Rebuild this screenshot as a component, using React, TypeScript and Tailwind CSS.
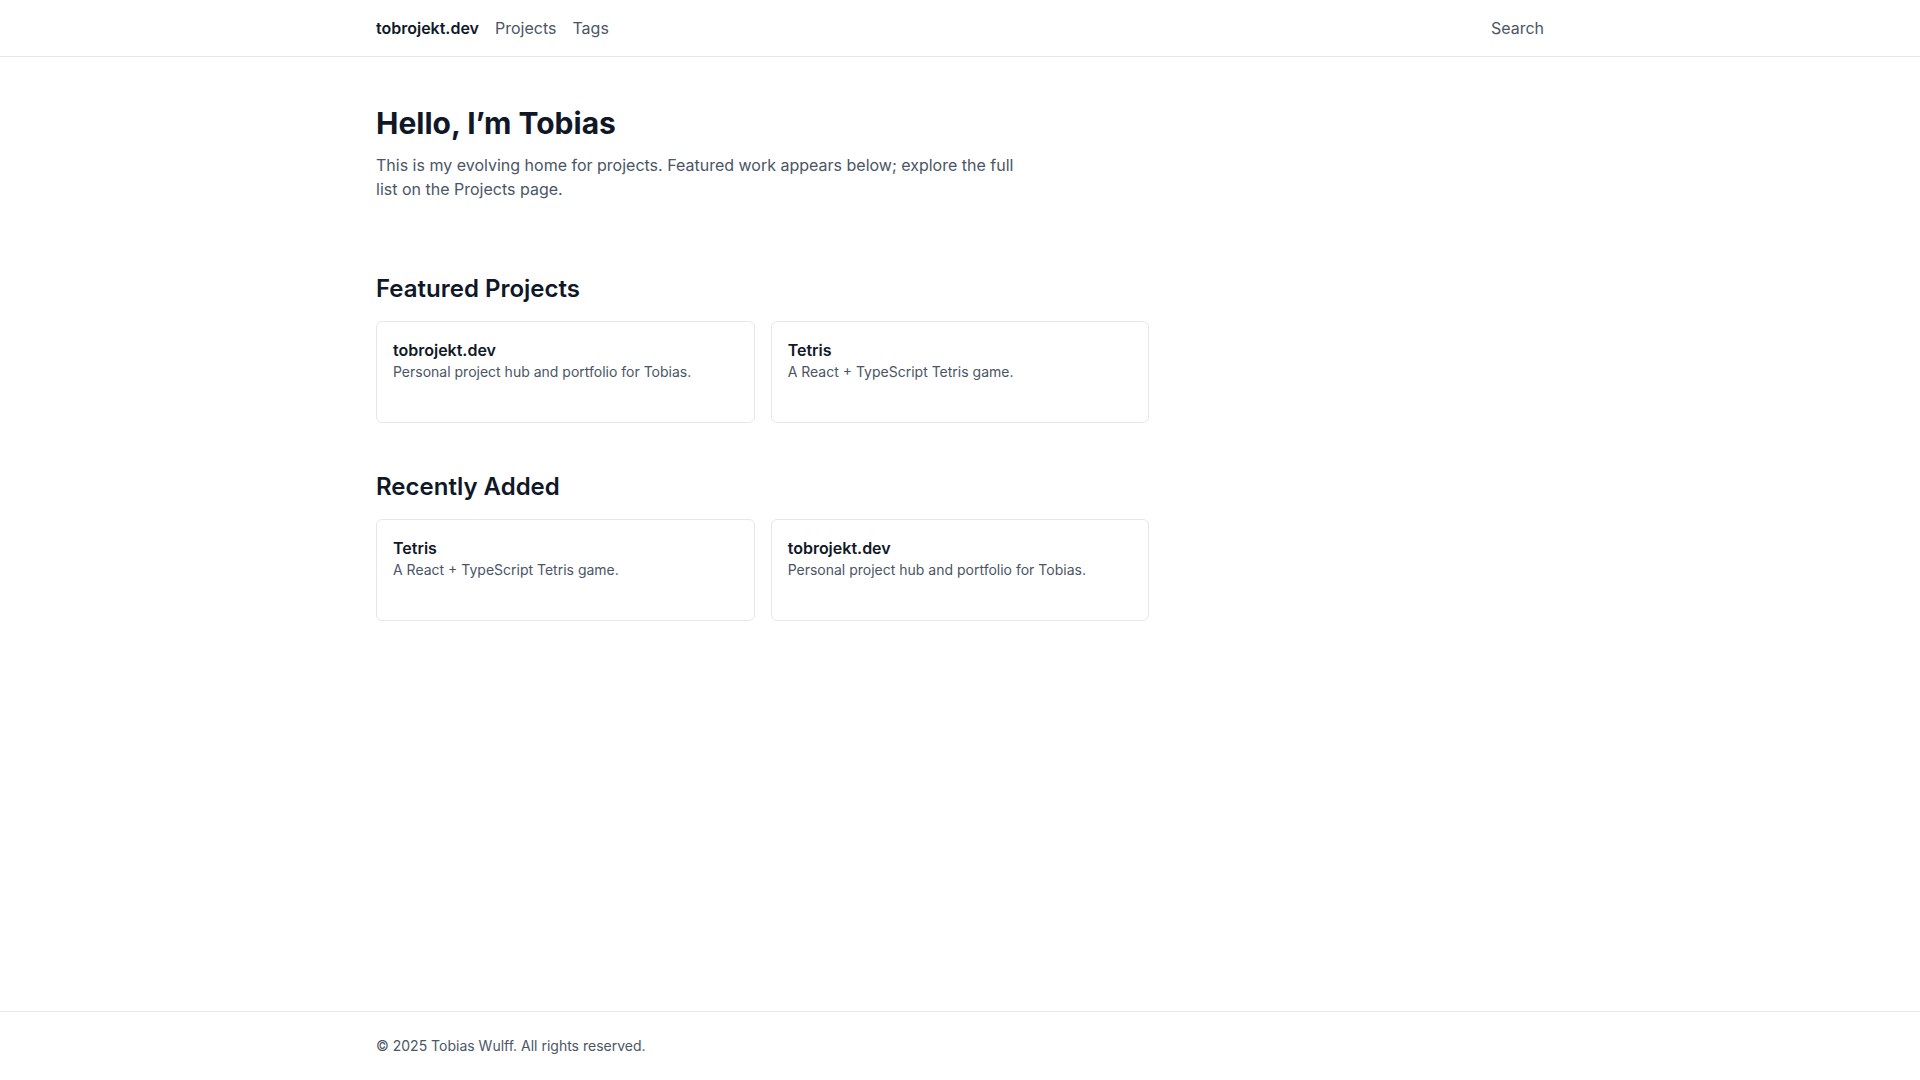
import React from "react";

type Project = { title: string; description: string };

const tob: Project = {
  title: "tobrojekt.dev",
  description: "Personal project hub and portfolio for Tobias.",
};
const tetris: Project = {
  title: "Tetris",
  description: "A React + TypeScript Tetris game.",
};

function Card({ p }: { p: Project }) {
  return (
    <a className="block min-h-[102px] rounded-md border border-gray-200 bg-white p-4">
      <h3 className="text-base font-semibold text-gray-900">{p.title}</h3>
      <p className="text-sm text-gray-600">{p.description}</p>
    </a>
  );
}

function Section({ title, items, className }: { title: string; items: Project[]; className?: string }) {
  return (
    <section className={className}>
      <h2 className="mb-4 text-2xl font-semibold text-gray-900">{title}</h2>
      <div className="grid grid-cols-3 gap-4">
        {items.map((p, i) => (
          <Card key={i} p={p} />
        ))}
      </div>
    </section>
  );
}

export default function App() {
  return (
    <div className="flex min-h-screen flex-col bg-white font-['Inter',sans-serif] text-gray-900 antialiased">
      <header className="border-b border-gray-200">
        <nav className="mx-auto flex h-14 max-w-[1200px] items-center justify-between px-4">
          <div className="flex items-center gap-4">
            <a className="font-semibold text-gray-900">tobrojekt.dev</a>
            <a className="text-gray-600">Projects</a>
            <a className="text-gray-600">Tags</a>
          </div>
          <a className="text-gray-600">Search</a>
        </nav>
      </header>
      <main className="flex-1">
        <div className="mx-auto max-w-[1200px] px-4 py-12">
          <section>
            <h1 className="text-3xl font-bold text-gray-900">Hello, I’m Tobias</h1>
            <p className="mt-3 max-w-[640px] text-base text-gray-600">
              This is my evolving home for projects. Featured work appears below; explore the full list on the Projects page.
            </p>
          </section>
          <Section className="mt-18" title="Featured Projects" items={[tob, tetris]} />
          <Section className="mt-12" title="Recently Added" items={[tetris, tob]} />
        </div>
      </main>
      <footer className="border-t border-gray-200">
        <div className="mx-auto max-w-[1200px] px-4 py-6 text-sm text-gray-600">
          © 2025 Tobias Wulff. All rights reserved.
        </div>
      </footer>
    </div>
  );
}
